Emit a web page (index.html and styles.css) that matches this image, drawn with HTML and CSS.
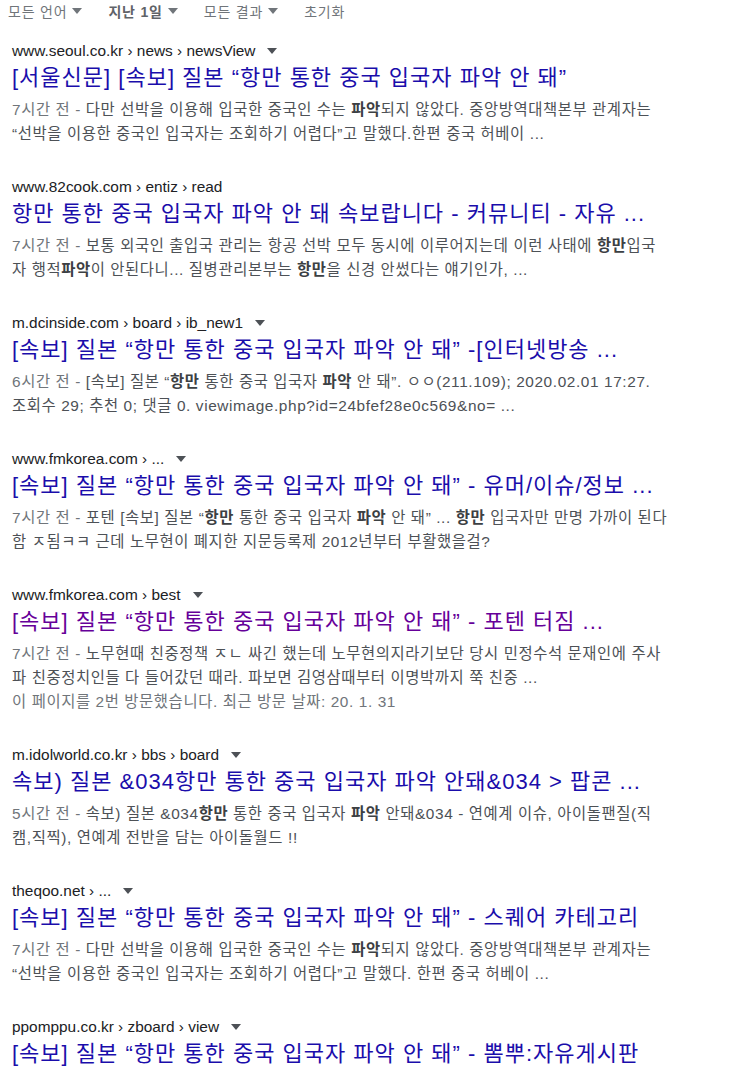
FILE: index.html
```html
<!DOCTYPE html>
<html lang="ko">
<head>
<meta charset="utf-8">
<title>검색 결과</title>
<link rel="stylesheet" href="styles.css">
</head>
<body>
<div class="tools">
  <span class="tool">모든 언어<i class="caret"></i></span>
  <span class="tool active">지난 1일<i class="caret"></i></span>
  <span class="tool">모든 결과<i class="caret"></i></span>
  <span class="tool">초기화</span>
</div>

<div class="results">
  <div class="result">
    <div class="url">www.seoul.co.kr › news › newsView<i class="caret"></i></div>
    <a class="title">[서울신문] [속보] 질본 “항만 통한 중국 입국자 파악 안 돼”</a>
    <div class="snippet"><span class="date">7시간 전 - </span>다만 선박을 이용해 입국한 중국인 수는 <b>파악</b>되지 않았다. 중앙방역대책본부 관계자는 “선박을 이용한 중국인 입국자는 조회하기 어렵다”고 말했다.한편 중국 허베이 ...</div>
  </div>

  <div class="result">
    <div class="url">www.82cook.com › entiz › read</div>
    <a class="title">항만 통한 중국 입국자 파악 안 돼 속보랍니다 - 커뮤니티 - 자유 ...</a>
    <div class="snippet"><span class="date">7시간 전 - </span>보통 외국인 출입국 관리는 항공 선박 모두 동시에 이루어지는데 이런 사태에 <b>항만</b>입국자 행적<b>파악</b>이 안된다니... 질병관리본부는 <b>항만</b>을 신경 안썼다는 얘기인가, ...</div>
  </div>

  <div class="result">
    <div class="url">m.dcinside.com › board › ib_new1<i class="caret"></i></div>
    <a class="title">[속보] 질본 “항만 통한 중국 입국자 파악 안 돼” -[인터넷방송 ...</a>
    <div class="snippet"><span class="date">6시간 전 - </span>[속보] 질본 “<b>항만</b> 통한 중국 입국자 <b>파악</b> 안 돼”. ㅇㅇ(211.109); 2020.02.01 17:27. 조회수 29; 추천 0; 댓글 0. viewimage.php?id=24bfef28e0c569&amp;no= ...</div>
  </div>

  <div class="result">
    <div class="url">www.fmkorea.com › ...<i class="caret"></i></div>
    <a class="title">[속보] 질본 “항만 통한 중국 입국자 파악 안 돼” - 유머/이슈/정보 ...</a>
    <div class="snippet"><span class="date">7시간 전 - </span>포텐 [속보] 질본 “<b>항만</b> 통한 중국 입국자 <b>파악</b> 안 돼” ... <b>항만</b> 입국자만 만명 가까이 된다 함 ㅈ됨ㅋㅋ 근데 노무현이 폐지한 지문등록제 2012년부터 부활했을걸?</div>
  </div>

  <div class="result">
    <div class="url">www.fmkorea.com › best<i class="caret"></i></div>
    <a class="title visited">[속보] 질본 “항만 통한 중국 입국자 파악 안 돼” - 포텐 터짐 ...</a>
    <div class="snippet"><span class="date">7시간 전 - </span>노무현때 친중정책 ㅈㄴ 싸긴 했는데 노무현의지라기보단 당시 민정수석 문재인에 주사파 친중정치인들 다 들어갔던 때라. 파보면 김영삼때부터 이명박까지 쭉 친중 ...</div>
    <div class="visit">이 페이지를 2번 방문했습니다. 최근 방문 날짜: 20. 1. 31</div>
  </div>

  <div class="result">
    <div class="url">m.idolworld.co.kr › bbs › board<i class="caret"></i></div>
    <a class="title">속보) 질본 &amp;034항만 통한 중국 입국자 파악 안돼&amp;034 &gt; 팝콘 ...</a>
    <div class="snippet"><span class="date">5시간 전 - </span>속보) 질본 &amp;034<b>항만</b> 통한 중국 입국자 <b>파악</b> 안돼&amp;034 - 연예계 이슈, 아이돌팬질(직캠,직찍), 연예계 전반을 담는 아이돌월드 !!</div>
  </div>

  <div class="result">
    <div class="url">theqoo.net › ...<i class="caret"></i></div>
    <a class="title">[속보] 질본 “항만 통한 중국 입국자 파악 안 돼” - 스퀘어 카테고리</a>
    <div class="snippet"><span class="date">7시간 전 - </span>다만 선박을 이용해 입국한 중국인 수는 <b>파악</b>되지 않았다. 중앙방역대책본부 관계자는 “선박을 이용한 중국인 입국자는 조회하기 어렵다”고 말했다. 한편 중국 허베이 ...</div>
  </div>

  <div class="result">
    <div class="url">ppomppu.co.kr › zboard › view<i class="caret"></i></div>
    <a class="title">[속보] 질본 “항만 통한 중국 입국자 파악 안 돼” - 뽐뿌:자유게시판</a>
    <div class="snippet"><span class="date">7시간 전 - </span>다만 선박을 이용해 입국한 중국인 수는 <b>파악</b>되지 않았다. 중앙방역대책본부 관계자는 ...</div>
  </div>
</div>
</body>
</html>
```

FILE: styles.css
```css
html, body {
  margin: 0;
  padding: 0;
  background: #fff;
  font-family: "Liberation Sans", Arial, "Noto Sans CJK KR", sans-serif;
  overflow: hidden;
}

.tools {
  display: flex;
  align-items: center;
  height: 22px;
  padding-left: 8px;
  gap: 26px;
  font-size: 14px;
  letter-spacing: 0.8px;
  color: #70757a;
}

.tool {
  display: inline-flex;
  align-items: center;
  white-space: nowrap;
}

.tool.active {
  font-weight: bold;
  color: #5f6368;
}

.caret {
  display: inline-block;
  width: 0;
  height: 0;
  border-left: 5px solid transparent;
  border-right: 5px solid transparent;
  border-top: 6px solid #70757a;
  margin-left: 5px;
}

.results {
  padding: 17px 0 0 12px;
  width: 658px;
}

.result {
  margin-bottom: 29px;
}

.url {
  display: flex;
  align-items: center;
  font-size: 15.4px;
  line-height: 24px;
  color: #202124;
  white-space: nowrap;
}

.url .caret {
  margin-left: 12px;
  border-top-color: #4d5156;
}

.title {
  display: block;
  margin-top: 1px;
  font-size: 22px;
  line-height: 28px;
  letter-spacing: 1px;
  color: #1a0dab;
  text-decoration: none;
  white-space: nowrap;
}

.title.visited {
  color: #660099;
}

.snippet {
  margin-top: 6px;
  font-size: 15.4px;
  line-height: 24px;
  letter-spacing: 0.6px;
  color: #4d5156;
}

.snippet b {
  color: #3c4043;
}

.date {
  color: #70757a;
}

.visit {
  font-size: 15.4px;
  line-height: 24px;
  letter-spacing: 0.6px;
  color: #70757a;
}
```
